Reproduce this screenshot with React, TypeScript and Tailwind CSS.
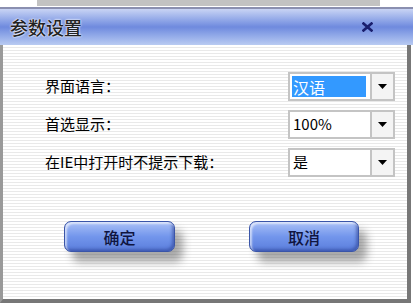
import React from 'react';

const font = { fontFamily: '"Noto Sans CJK SC", "Noto Sans", sans-serif' };

const Select: React.FC<{ value: string; selected?: boolean }> = ({ value, selected }) => (
  <div className="flex h-full w-[107px] border-2 border-[#c4c4c4] bg-white">
    <div className="flex flex-1 items-center pl-[2px]">
      <span
        className={
          selected
            ? 'flex h-[21px] w-[74px] items-center bg-[#3399ff] px-[1px] text-[16px] text-white'
            : 'flex h-[21px] items-center px-[1px] text-[15px] text-black'
        }
      >
        {value}
      </span>
    </div>
    <div className="flex w-[23px] items-center justify-center border-l-2 border-[#c4c4c4] bg-[#f4f4f4]">
      <svg width="9" height="5" viewBox="0 0 9 5">
        <path d="M0 0h9L4.5 5z" fill="#000" />
      </svg>
    </div>
  </div>
);

const GlossButton: React.FC<{ label: string; width: string }> = ({ label, width }) => (
  <div className={`relative h-[31px] ${width}`}>
    {/* drop shadow */}
    <div className="absolute left-[8px] right-[-8px] top-[9px] h-[32px] rounded-[8px] bg-[#444] opacity-45 blur-[4px]" />
    <div className="relative flex h-full w-full items-center justify-center rounded-[7px] border border-[#3a55a8] bg-gradient-to-b from-[#aac0f6] via-[#7396ec] to-[#5a7ddc] shadow-[inset_2px_2px_2px_rgba(255,255,255,0.6),inset_-2px_-2px_3px_rgba(40,60,140,0.5)]">
      <span className="text-[16px] font-medium text-[#101540]">{label}</span>
    </div>
  </div>
);

export default function App() {
  return (
    <div className="h-[303px] w-[420px] overflow-hidden bg-white" style={font}>
      <div className="ml-[37px] h-[6px] w-[343px] bg-[#c2c2c2]" />
      <div className="mt-[1px] w-[413px]">
        {/* Title bar */}
        <div className="flex h-[38px] items-center justify-between border-t-2 border-[#8a8fb0] bg-gradient-to-b from-[#c9d4f4] via-[#6f8ade] to-[#b9cbf2] pl-[10px] pr-[40px]">
          <span className="text-[18px] font-medium text-[#222] [text-shadow:0_0_2px_#fff,0_0_2px_#fff]">参数设置</span>
          <svg width="11" height="10" viewBox="0 0 11 10">
            <path d="M1.5 1.5l8 7M9.5 1.5l-8 7" stroke="#1a1f6e" strokeWidth="2.6" strokeLinecap="square" />
          </svg>
        </div>
        {/* Body */}
        <div className="mr-[2px] h-[258px] border-b-4 border-l-[3px] border-r-4 border-b-[#777] border-l-[#999] border-r-[#777] bg-[repeating-linear-gradient(to_bottom,#ffffff_0px,#ffffff_2px,#e9e9e9_2px,#e9e9e9_3px)]">
          <div className="flex flex-col gap-[9px] pl-[42px] pt-[27px]">
            <div className="flex h-[29px] items-center">
              <span className="w-[243px] text-[15px] text-black">界面语言：</span>
              <Select value="汉语" selected />
            </div>
            <div className="flex h-[29px] items-center">
              <span className="w-[243px] text-[15px] text-black">首选显示：</span>
              <Select value="100%" />
            </div>
            <div className="flex h-[29px] items-center">
              <span className="w-[243px] text-[15px] text-black">在IE中打开时不提示下载：</span>
              <Select value="是" />
            </div>
          </div>
          <div className="mt-[44px] flex gap-[74px] pl-[61px]">
            <GlossButton label="确定" width="w-[111px]" />
            <GlossButton label="取消" width="w-[110px]" />
          </div>
        </div>
      </div>
    </div>
  );
}
